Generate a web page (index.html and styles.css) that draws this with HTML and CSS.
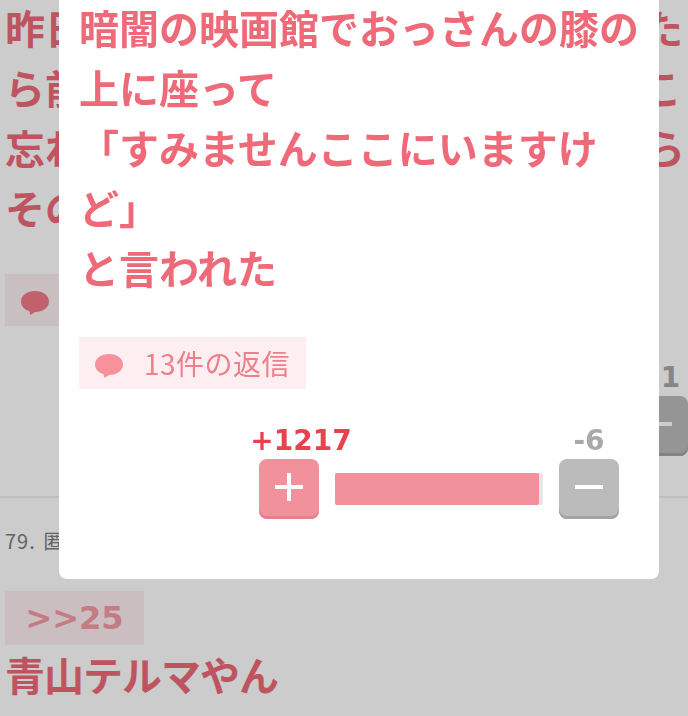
FILE: index.html

```html
<!DOCTYPE html>
<html lang="ja">
<head>
  <meta charset="UTF-8" />
  <meta name="viewport" content="width=device-width, initial-scale=1.0" />
  <title>レス</title>
  <link rel="stylesheet" href="styles.css">
</head>
<body>
  <main class="page">
    <section class="post">
      <p class="post-text">昨日の夜に映画を一人で観に行ってたら前の席が空いていたので座ってここ忘れ物を取りに戻った人が来て後からそのまま</p>
      <a class="replies">
        <svg class="bubble" viewBox="0 0 28 24"><path d="M14 0C6 0 0 4.500 0 10.500c0 4.500 3.500 8.300 8.500 9.700L9.500 24l4.500-3C22 21 28 16.500 28 10.500 28 4.500 22 0 14 0z"/></svg>
        <span>13件の返信</span>
      </a>
      <div class="vote">
        <div class="vote-side down">
          <span class="count">-11</span>
          <button class="vote-btn"><svg class="vote-icon" viewBox="0 0 30 30"><path d="M1 15h28"/></svg></button>
        </div>
      </div>
    </section>
    <section class="post">
      <div class="post-head">79. 匿名</div>
      <a class="anchor">&gt;&gt;25</a>
      <p class="post-text">青山テルマやん</p>
    </section>
  </main>

  <div class="overlay"></div>

  <div class="modal">
    <p class="post-text">暗闇の映画館でおっさんの膝の上に座って<br>「すみませんここにいますけど」<br>と言われた</p>
    <a class="replies">
      <svg class="bubble" viewBox="0 0 28 24"><path d="M14 0C6 0 0 4.500 0 10.500c0 4.500 3.500 8.300 8.500 9.700L9.500 24l4.500-3C22 21 28 16.500 28 10.500 28 4.500 22 0 14 0z"/></svg>
      <span>13件の返信</span>
    </a>
    <div class="vote">
      <div class="vote-side up">
        <span class="count">+1217</span>
        <button class="vote-btn"><svg class="vote-icon" viewBox="0 0 30 30"><path d="M15 1v28M1 15h28"/></svg></button>
      </div>
      <div class="ratio"><div class="ratio-fill" style="width: 98%"></div></div>
      <div class="vote-side down">
        <span class="count">-6</span>
        <button class="vote-btn"><svg class="vote-icon" viewBox="0 0 30 30"><path d="M1 15h28"/></svg></button>
      </div>
    </div>
  </div>
</body>
</html>
```

FILE: styles.css

```css
html, body {
  margin: 0;
  height: 716px;
  overflow: hidden;
}
body {
  font-family: 'Noto Sans CJK JP', sans-serif;
  background-color: #fff;
  color: #ee6a78;
}
.page {
  padding-left: 5px;
}
.post-text {
  margin: -3px 0 3px;
  font-size: 40px;
  font-weight: bold;
  line-height: 60px;
}
.post-head ~ .post-text {
  letter-spacing: -1px;
}
.post + .post {
  margin: 40px 0 0 -5px;
  padding-left: 5px;
  border-top: 2px solid #eee;
}
.replies {
  display: inline-flex;
  align-items: center;
  gap: 21px;
  height: 52px;
  padding: 0 16px;
  background-color: #fdeff1;
  color: #ee7f8c;
  font-size: 28px;
  letter-spacing: 0.5px;
}
.post .replies {
  margin-top: 34px;
}
.bubble {
  width: 28px;
  height: 24px;
  margin-top: 6px;
  fill: #f6929c;
}
.post .bubble {
  fill: #f07a86;
}
.vote {
  display: flex;
  justify-content: flex-end;
  align-items: flex-end;
  gap: 16px;
  margin-top: 33px;
}
.vote-side {
  display: flex;
  flex-direction: column;
  align-items: center;
  width: 60px;
}
.count {
  font-family: 'DejaVu Sans', sans-serif;
  font-size: 28px;
  font-weight: bold;
  line-height: 37px;
  white-space: nowrap;
}
.up .count {
  padding-left: 24px;
  color: #e8424f;
}
.down .count {
  color: #a8a8a8;
}
.post .down .count {
  padding-right: 6px;
}
.vote-btn {
  display: flex;
  align-items: center;
  justify-content: center;
  width: 60px;
  height: 60px;
  padding: 0 0 4px;
  border: none;
  border-radius: 8px;
}
.vote-icon {
  width: 30px;
  height: 30px;
  fill: none;
  stroke: #fff;
  stroke-width: 4;
}
.up .vote-btn {
  background-color: #f1919b;
  box-shadow: inset 0 -3px 0 #e5818b;
}
.down .vote-btn {
  background-color: #bbb;
  box-shadow: inset 0 -3px 0 #a3a3a3;
}
.ratio {
  width: 208px;
  height: 32px;
  margin-bottom: 14px;
  background-color: #e6e6e6;
  border-radius: 2px;
}
.ratio-fill {
  height: 100%;
  background-color: #f1919b;
  border-radius: 2px;
}
.post-head {
  margin-top: 30px;
  color: #7d7d7d;
  font-size: 20px;
  line-height: 26px;
  letter-spacing: 1px;
  word-spacing: 2px;
}
.anchor {
  display: block;
  width: 139px;
  height: 54px;
  margin: 37px 0 2px;
  background-color: #fdeef0;
  font-family: 'DejaVu Sans', sans-serif;
  font-size: 32px;
  font-weight: bold;
  line-height: 54px;
  text-align: center;
  color: #f59aa5;
}
.overlay {
  position: fixed;
  inset: 0;
  background-color: rgba(0, 0, 0, 0.2);
}
.modal {
  position: absolute;
  top: 0;
  left: 59px;
  width: 560px;
  height: 579px;
  padding: 0 20px;
  background-color: #fff;
  border-radius: 0 0 8px 8px;
}
.modal .replies {
  margin-top: 37px;
}
.modal .vote {
  margin: 33px 20px 0 0;
}
```
